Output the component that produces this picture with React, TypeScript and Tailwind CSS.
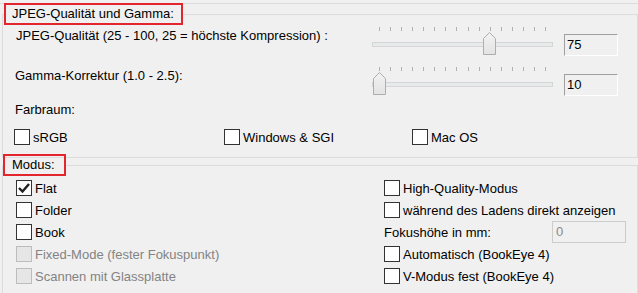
import React from 'react';

const TICKS = Array.from({ length: 16 }, (_, i) => 7 + Math.round(i * 11.07));

const Thumb: React.FC<{ left: number }> = ({ left }) => (
    <svg className="absolute top-[5px]" style={{ left }} width="13" height="23" viewBox="0 0 13 23">
        <defs>
            <linearGradient id="thumbFill" x1="0" y1="0" x2="0" y2="1">
                <stop offset="0" stopColor="#f2f2f2" />
                <stop offset="1" stopColor="#e3e3e3" />
            </linearGradient>
        </defs>
        <path d="M0.5 6.5 L6.5 0.5 L12.5 6.5 L12.5 22.5 L0.5 22.5 Z" fill="url(#thumbFill)" stroke="#adadad" />
    </svg>
);

const Slider: React.FC<{ thumb: number }> = ({ thumb }) => (
    <div className="relative w-[181px] h-[28px] shrink-0">
        {TICKS.map(x => (
            <div key={x} className="absolute top-0 w-px h-[4px] bg-[#b0b0b0]" style={{ left: x }} />
        ))}
        <div className="absolute left-0 top-[15px] w-[181px] h-[5px] border border-[#d6d6d6] bg-[#e7eaea]" />
        <Thumb left={thumb} />
    </div>
);

const ValueBox: React.FC<{ value: string }> = ({ value }) => (
    <div className="ml-[11px] mt-[7px] w-[54px] h-[22px] border-t border-l border-[#a0a0a0] border-b border-r border-b-white border-r-white pl-[2px] leading-[20px]">
        {value}
    </div>
);

const Check: React.FC<{ label: string; checked?: boolean; disabled?: boolean }> = ({ label, checked, disabled }) => (
    <div className="flex items-center h-[22px]">
        <div className={`w-4 h-4 shrink-0 border flex items-center justify-center ${disabled ? 'border-[#bcbcbc] bg-[#e6e6e6]' : 'border-[#333333] bg-white'}`}>
            {checked && (
                <svg width="14" height="14" viewBox="0 0 14 14">
                    <path d="M2 7 L5.5 10.5 L12 3" fill="none" stroke="#222" strokeWidth="2.4" />
                </svg>
            )}
        </div>
        <span className={`ml-[3px] whitespace-nowrap ${disabled ? 'text-[#838383]' : ''}`}>{label}</span>
    </div>
);

export default function App() {
    return (
        <div className="w-[638px] h-[293px] overflow-hidden bg-[#f0f0f0] text-[13px] leading-[15px] text-black font-['Liberation_Sans',Arial,sans-serif]">
            <div className="mt-[3px] border-t border-[#dcdcdc]">
                <fieldset className="-mt-[1px] ml-[2px] w-[636px] border border-[#dcdcdc] pb-[9px]">
                    <legend className="ml-px h-[22px] border-2 border-[#e3262d] pl-[6px] pr-[7px] leading-[18px]">JPEG-Qualität und Gamma:</legend>

                    <div className="mt-[2px] flex h-[28px]">
                        <div className="w-[369px] shrink-0 pl-[13px] pt-px whitespace-nowrap">JPEG-Qualität (25 - 100, 25 = höchste Kompression) :</div>
                        <Slider thumb={111} />
                        <ValueBox value="75" />
                    </div>

                    <div className="mt-[12px] flex h-[28px]">
                        <div className="w-[369px] shrink-0 pl-[12px] pt-px whitespace-nowrap">Gamma-Korrektur (1.0 - 2.5):</div>
                        <Slider thumb={1} />
                        <ValueBox value="10" />
                    </div>

                    <div className="mt-[7px] pl-[12px]">Farbraum:</div>

                    <div className="mt-[9px] flex pl-[11px]">
                        <div className="w-[210px]"><Check label="sRGB" /></div>
                        <div className="w-[188px]"><Check label="Windows &amp; SGI" /></div>
                        <Check label="Mac OS" />
                    </div>
                </fieldset>

                <fieldset className="-mt-[4px] ml-[2px] w-[636px] h-[150px] border border-[#dcdcdc]">
                    <legend className="h-[22px] border-2 border-[#e3262d] pl-[7px] pr-[9px] leading-[18px]">Modus:</legend>

                    <div className="mt-px flex">
                        <div className="w-[381px] shrink-0 pl-[13px]">
                            <Check label="Flat" checked />
                            <Check label="Folder" />
                            <Check label="Book" />
                            <Check label="Fixed-Mode (fester Fokuspunkt)" disabled />
                            <Check label="Scannen mit Glassplatte" disabled />
                        </div>
                        <div>
                            <Check label="High-Quality-Modus" />
                            <Check label="während des Ladens direkt anzeigen" />
                            <div className="flex items-center h-[22px]">
                                <span className="w-[168px] shrink-0">Fokushöhe in mm:</span>
                                <div className="w-[74px] h-[22px] border border-[#cccccc] pl-[3px] leading-[20px] text-[#8a8a8a]">0</div>
                            </div>
                            <Check label="Automatisch (BookEye 4)" />
                            <Check label="V-Modus fest (BookEye 4)" />
                        </div>
                    </div>
                </fieldset>
            </div>
        </div>
    );
}
